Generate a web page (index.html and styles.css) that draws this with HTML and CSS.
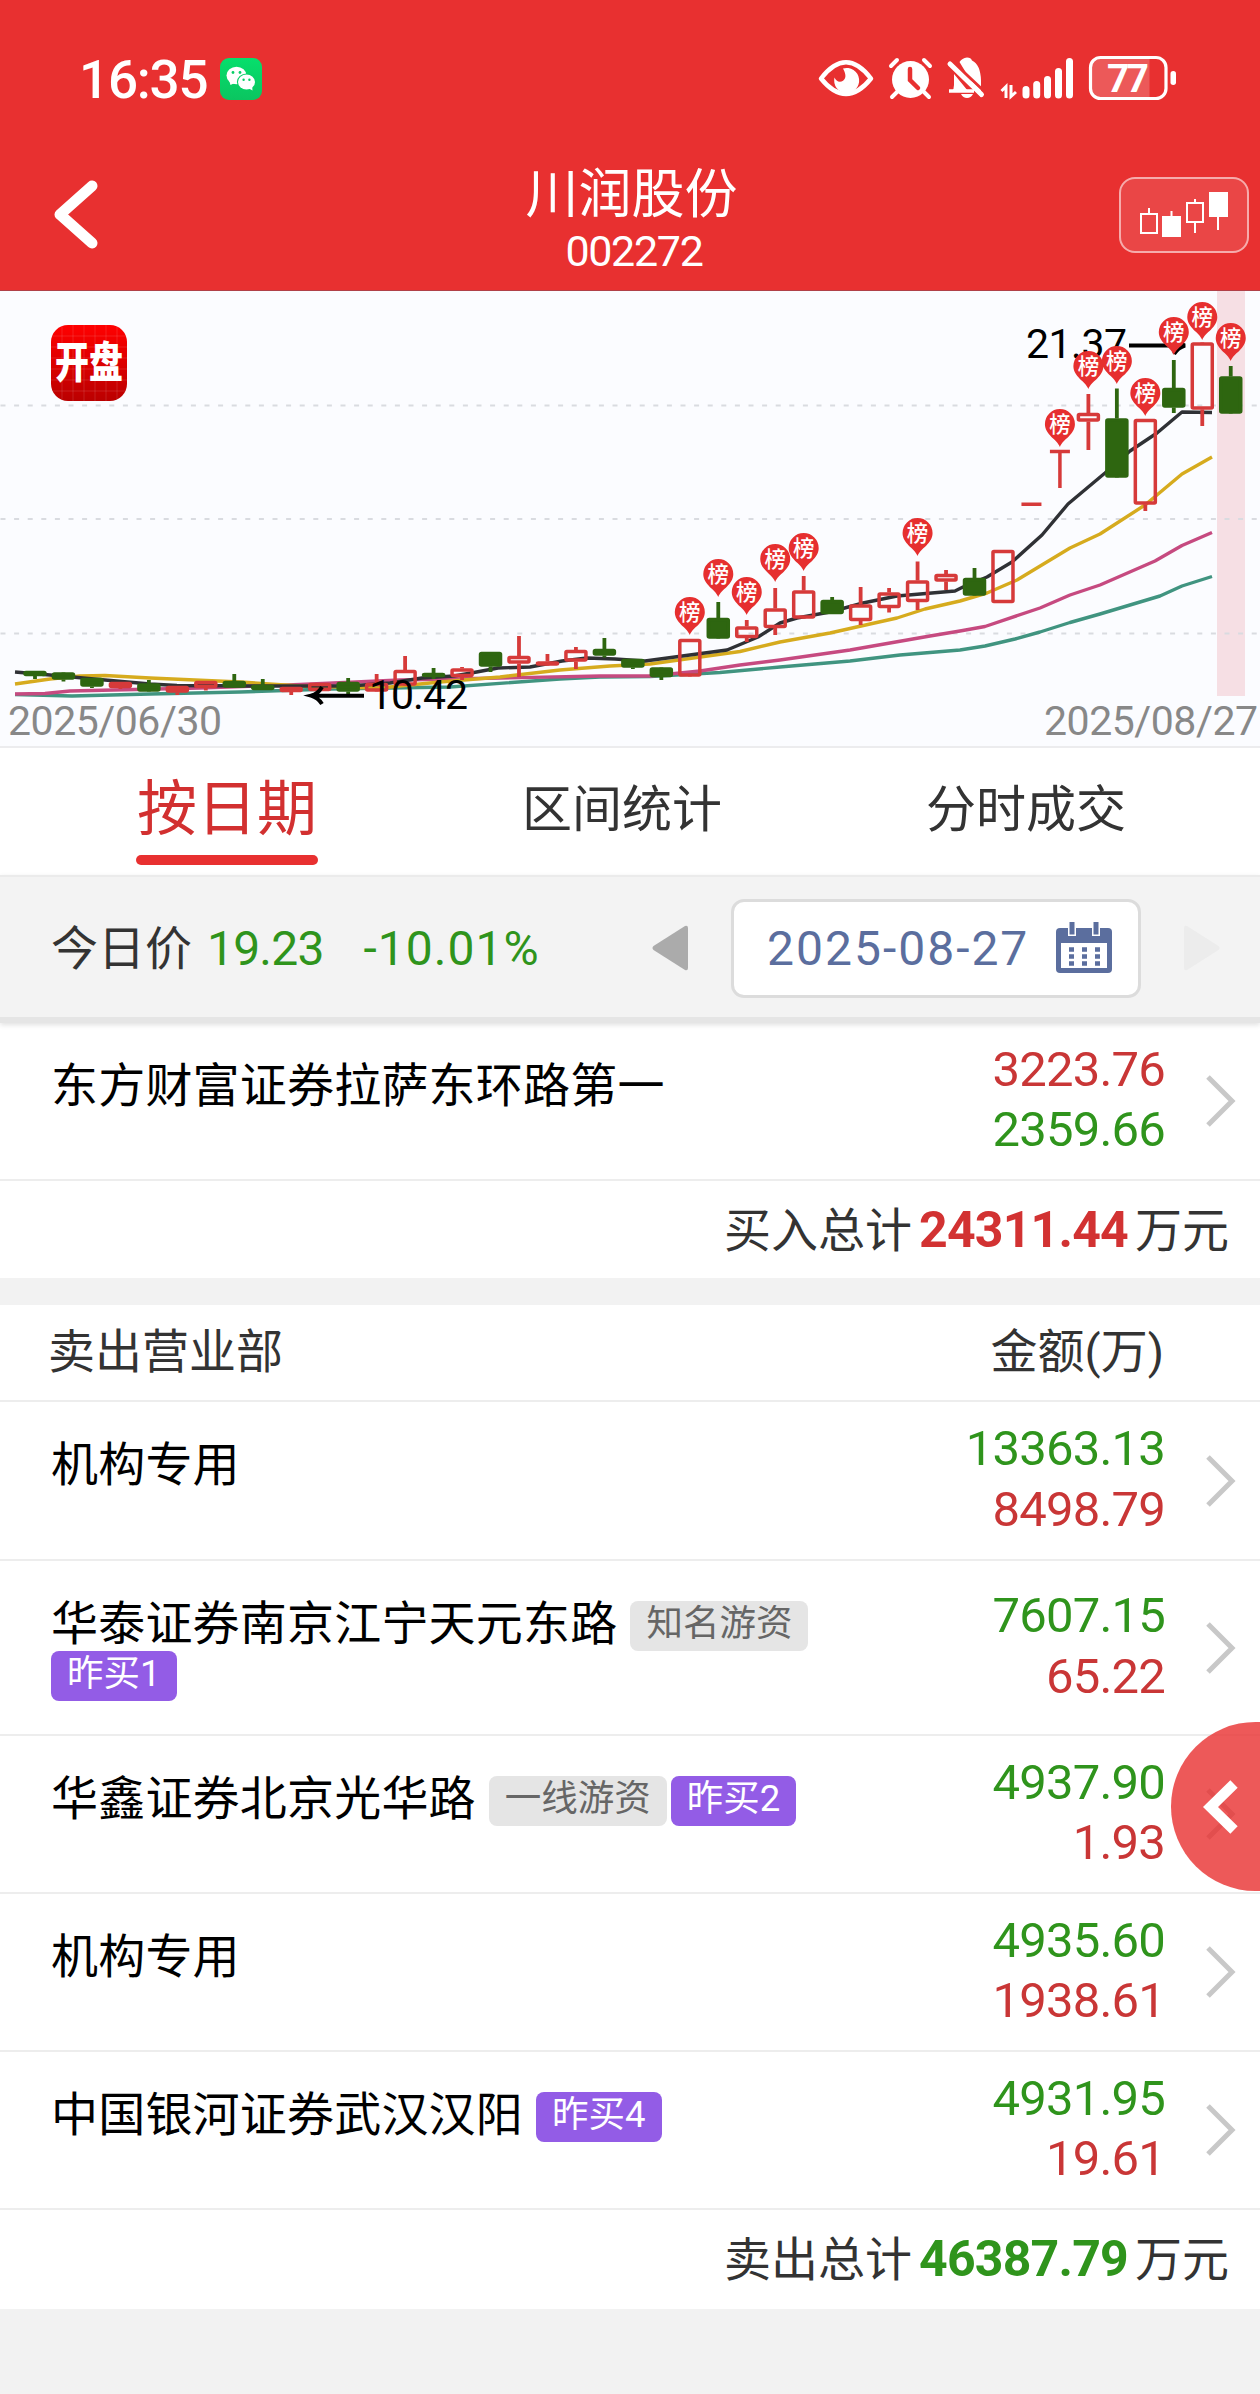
FILE: index.html
```
<!DOCTYPE html>
<html lang="zh-CN">
<head>
<meta charset="UTF-8">
<meta name="viewport" content="width=device-width, initial-scale=1.0">
<title>川润股份 002272</title>
<link rel="stylesheet" href="styles.css">
</head>
<body>
<header class="header">
    <div class="status-bar">
        <div class="status-left">
            <span class="clock">16:35</span>
            <svg class="wechat" width="42" height="42" viewBox="0 0 42 42">
                <defs>
                    <linearGradient id="wx" x1="0" y1="0" x2="0" y2="1">
                        <stop offset="0" stop-color="#06df6c"/>
                        <stop offset="1" stop-color="#0bc560"/>
                    </linearGradient>
                </defs>
                <rect width="42" height="42" rx="9" fill="url(#wx)"/>
                <path d="M9 22l1.500 5 5-2.500z" fill="#fff"/>
                <ellipse cx="16.500" cy="17.500" rx="10" ry="8.800" fill="#fff"/>
                <circle cx="13" cy="14.500" r="1.400" fill="#08cf66"/>
                <circle cx="20" cy="14.500" r="1.400" fill="#08cf66"/>
                <ellipse cx="26.500" cy="24" rx="9.600" ry="8.600" fill="#08cf66"/>
                <ellipse cx="26.500" cy="24" rx="8.500" ry="7.500" fill="#fff"/>
                <path d="M28 30l4.500 2.500-.5-5z" fill="#fff"/>
                <circle cx="23.600" cy="21.800" r="1.200" fill="#08cf66"/>
                <circle cx="29.400" cy="21.800" r="1.200" fill="#08cf66"/>
            </svg>
        </div>
        <svg class="status-icons" width="360" height="48" viewBox="817 55 360 48">
            <!-- eye -->
            <path d="M821 78.500Q846 46 871 78.500Q846 109.500 821 78.500z" fill="none" stroke="#fff" stroke-width="4.500" stroke-linejoin="round"/>
            <path d="M843 68.500a12.500 12.500 0 1 1-8.500 9q2 5 7 4q7-3 1.500-13z" fill="#fff"/>
            <!-- alarm -->
            <circle cx="910.500" cy="79.500" r="18.500" fill="#fff"/>
            <path d="M897 92l-5 5M924 92l5 5M891 66l6-6M930 66l-6-6" stroke="#fff" stroke-width="4" stroke-linecap="round"/>
            <path d="M910 69v11l8 8" fill="none" stroke="#e83030" stroke-width="4.500" stroke-linecap="round"/>
            <!-- muted bell -->
            <path d="M952 91q2-2 2-6V74l14 17z" fill="#fff"/>
            <path d="M949 91h25" stroke="#fff" stroke-width="3.500"/>
            <path d="M959.500 62Q962 58 967 57.500q4 0 5 3q8.500 4 9 20v17z" fill="#fff"/>
            <path d="M952 61l33 31" stroke="#e83030" stroke-width="3"/>
            <path d="M950 64l31.500 30.500" stroke="#fff" stroke-width="5" stroke-linecap="round"/>
            <path d="M961 94h12q-2 4-6 4t-6-4z" fill="#fff"/>
            <!-- data arrows and signal -->
            <path d="M1001.500 91l4.500-4.500V98M1011 85v11.500l5-4.500" fill="none" stroke="#fff" stroke-width="3"/>
            <g stroke="#fff" stroke-width="7" stroke-linecap="round">
                <path d="M1026 89.500v5.500M1036.700 84.500v10.500M1047.500 79.500v15.500M1058.500 71.500v23.500M1069.500 61.500v33.500"/>
            </g>
            <!-- battery -->
            <path d="M1100 58h49.500v40H1100a9 9 0 0 1-9-9V67a9 9 0 0 1 9-9z" fill="#fff" fill-opacity=".2"/>
            <rect x="1090.500" y="57.500" width="75.500" height="41" rx="10" fill="none" stroke="#fff" stroke-width="3.200"/>
            <rect x="1170.500" y="71" width="5.500" height="14" rx="2.700" fill="#fff"/>
            <text class="battery-text" x="1128" y="92" text-anchor="middle" textLength="42">77</text>
        </svg>
    </div>
    <div class="nav-bar">
        <svg class="back" width="46" height="70" viewBox="0 0 46 70">
            <path d="M40 6L8 34.500L40 63" fill="none" stroke="#fff" stroke-width="11" stroke-linecap="round" stroke-linejoin="round"/>
        </svg>
        <div class="stock">
            <div class="stock-name">川润股份</div>
            <div class="stock-code">002272</div>
        </div>
        <div class="kline-button">
            <svg width="90" height="48" viewBox="1140 191 90 48" fill="none" stroke="#fff" stroke-width="2">
                <path d="M1142 214h16v19h-16zM1150 208v6"/>
                <path d="M1164 217h17v19h-17zM1172.500 211v6" fill="#fff"/>
                <path d="M1188 203h16v19h-16zM1196 199v4M1196 222v11"/>
                <path d="M1211 193h17v23h-17zM1219 216v14" fill="#fff"/>
            </svg>
        </div>
    </div>
</header>

<section class="chart">
    <svg id="kline" width="1260" height="455" viewBox="0 291 1260 455"></svg>
</section>

<nav class="tabs">
    <div class="tab active">按日期</div>
    <div class="tab">区间统计</div>
    <div class="tab">分时成交</div>
</nav>

<div class="price-bar">
    <span class="price-label">今日价</span>
    <span class="price">19.23</span>
    <span class="change">-10.01%</span>
    <svg class="prev" width="36" height="46" viewBox="0 0 36 46"><path d="M36 3v40q0 3-3 2L1.500 25q-2-2 0-4L33 1q3-1 3 2z" fill="#ababab"/></svg>
    <div class="date-box">
        <span class="date">2025-08-27</span>
        <svg width="56" height="52" viewBox="0 0 56 52">
            <path d="M4 6h48q4 0 4 4v37q0 4-4 4H4q-4 0-4-4V10q0-4 4-4z" fill="#5b6e9e"/>
            <path d="M5 21h46v25H5z" fill="#fff"/>
            <path d="M12 0h8v14h-8zM36 0h8v14h-8z" fill="#fff"/>
            <path d="M13.500 0h5v12.500h-5zM37.500 0h5v12.500h-5z" fill="#5b6e9e"/>
            <path d="M13 27.500h31M13 34.500h31M13 41.500h31" stroke="#5b6e9e" stroke-width="4.500" stroke-dasharray="5 8"/>
        </svg>
    </div>
    <svg class="next" width="36" height="46" viewBox="0 0 36 46"><path d="M0 3v40q0 3 3 2L34.500 25q2-2 0-4L3 1q-3-1-3 2z" fill="#ececec"/></svg>
</div>

<section class="seats">
    <div class="row">
        <div class="name">东方财富证券拉萨东环路第一</div>
        <div class="amount"><span class="red">3223.76</span><span class="green">2359.66</span></div>
        <svg class="arrow" viewBox="0 0 30 52"><path d="M2 2l24 24L2 50"/></svg>
    </div>
    <div class="total">买入总计<b class="red-b">24311.44</b>万元</div>
</section>

<section class="seats sell">
    <div class="seats-head"><span>卖出营业部</span><span>金额(万)</span></div>
    <div class="row first">
        <div class="name">机构专用</div>
        <div class="amount"><span class="green">13363.13</span><span class="red">8498.79</span></div>
        <svg class="arrow" viewBox="0 0 30 52"><path d="M2 2l24 24L2 50"/></svg>
    </div>
    <div class="row tall">
        <div class="name">华泰证券南京江宁天元东路<span class="tag after">知名游资</span><br><span class="tag buy">昨买1</span></div>
        <div class="amount"><span class="green">7607.15</span><span class="red">65.22</span></div>
        <svg class="arrow" viewBox="0 0 30 52"><path d="M2 2l24 24L2 50"/></svg>
    </div>
    <div class="row">
        <div class="name">华鑫证券北京光华路<span class="tag after">一线游资</span><span class="tag buy">昨买2</span></div>
        <div class="amount"><span class="green">4937.90</span><span class="red">1.93</span></div>
        <svg class="arrow" viewBox="0 0 30 52"><path d="M2 2l24 24L2 50"/></svg>
    </div>
    <div class="row">
        <div class="name">机构专用</div>
        <div class="amount"><span class="green">4935.60</span><span class="red">1938.61</span></div>
        <svg class="arrow" viewBox="0 0 30 52"><path d="M2 2l24 24L2 50"/></svg>
    </div>
    <div class="row">
        <div class="name">中国银河证券武汉汉阳<span class="tag buy after">昨买4</span></div>
        <div class="amount"><span class="green">4931.95</span><span class="red">19.61</span></div>
        <svg class="arrow" viewBox="0 0 30 52"><path d="M2 2l24 24L2 50"/></svg>
    </div>
    <div class="total">卖出总计<b class="green-b">46387.79</b>万元</div>
</section>

<div class="drawer">
    <svg width="36" height="54" viewBox="0 0 36 54"><path d="M32 4L8.500 27L32 50" fill="none" stroke="#fff" stroke-width="10.500"/></svg>
</div>

<script>
    const RED = '#d63a3a';
    const GREEN = '#2e6610';
    const STEP = 28.47;
    const FIRST_X = 35;

    // [color, body top, body bottom, high, low]
    const candles = [
        ['g', 671, 676, 671, 679], ['g', 672.5, 679.5, 672, 681.5], ['g', 678, 686.5, 678, 688],
        ['r', 682, 688, 682, 689], ['g', 683.5, 691.5, 680, 692], ['r', 686, 692.5, 686, 695],
        ['r', 681, 688, 681, 690.5], ['g', 681, 687.5, 674, 688], ['g', 685, 690, 679, 690],
        ['r', 687, 692, 687, 695], ['r', 683, 691, 683, 691], ['g', 682, 691.5, 678, 694],
        ['r', 683, 691.5, 674, 692], ['r', 670, 685.5, 656, 686], ['g', 673, 677, 668, 679],
        ['r', 668.5, 677, 667, 680], ['g', 652, 666.5, 652, 672], ['r', 656, 663.5, 636, 677],
        ['r', 661.5, 665.5, 654, 666], ['r', 650, 661.5, 647, 669], ['g', 649, 655.5, 638, 657.5],
        ['g', 659, 667.5, 659, 669], ['g', 667.5, 677, 667, 680], ['r', 639, 676.5, 639, 676],
        ['g', 618, 638.5, 602, 638], ['r', 626.5, 638, 620, 642], ['r', 608.5, 628, 588, 635],
        ['r', 590.5, 618.5, 576, 618], ['g', 600, 614, 597, 614], ['r', 604.5, 621, 587, 625],
        ['r', 592.5, 608, 588, 612.5], ['r', 580.5, 602, 561.5, 610], ['r', 574, 581.5, 570, 590],
        ['g', 578, 595.5, 568, 595], ['r', 550, 603, 550, 603], ['-', 504.3, 504.3, 504, 504],
        ['-', 451.5, 451.5, 451, 488], ['r', 413, 421.5, 394, 450], ['g', 418.5, 477.5, 388.5, 477],
        ['r', 419, 504.5, 419, 511], ['g', 388, 407.5, 360, 413], ['r', 342.5, 409.5, 343, 426],
        ['g', 376.5, 413.5, 366, 413]
    ];

    // candle index -> centre of the 榜 pin
    const pins = [[23, 612], [24, 574], [25, 592], [26, 559], [27, 548], [31, 533], [36, 424],
        [37, 366], [38, 361], [39, 393], [40, 332], [41, 317], [42, 338]];

    const averages = [
        ['#409480', '15,694.5 72,696 150,694 240,692 330,689 450,687 560,679 600,677 650,676.500 720,672.500 780,667 850,661 900,655 960,650 985,646 1015,639 1040,632 1070,622.500 1100,614 1160,596 1182,586 1212,576.500'],
        ['#c64a80', '15,694 45,693.500 70,691 200,688 300,684.500 400,680 500,678 600,676 650,676 700,671 740,665 780,660 850,650 930,636 960,631 985,626.500 1040,608 1070,595 1100,585 1155,561 1182,545.500 1212,532.500'],
        ['#d6ab1e', '15,684 50,679 80,676 105,675.500 150,678 240,682 300,686 380,688 440,682 500,677 560,670 610,666 650,664 740,651.500 780,642 830,633 870,624 897,618 925,609 960,601 987,593 1017,580 1070,548 1100,534 1145,505 1182,474 1212,457'],
        ['#2f3135', '15,672 50,675 105,680 150,684 177,685.500 260,686 300,686 350,686 390,683 422,678 454,676 474,672.500 498,668 530,667 562,661 587,658 615,659 645,661 727,650 758,637 780,623 797,618 830,612 863,603 897,596 955,591 963,587 987,577 1012,562 1042,535 1068,504 1105,473 1130,451 1157,433 1182,412 1212,412.500']
    ];

    const x = index => FIRST_X + index * STEP;
    let out = '';

    out += '<rect x="1217" y="291" width="28" height="405" fill="#f6dfe4"/>';
    [405.5, 519, 633.5].forEach(y => {
        out += `<path d="M0.500 ${y}H1260" stroke="#d9dbe0" stroke-width="1.800" stroke-dasharray="5 8.600"/>`;
    });

    averages.forEach(([color, points]) => {
        out += `<polyline points="${points}" fill="none" stroke="${color}" stroke-width="3.400" stroke-linejoin="round"/>`;
    });

    candles.forEach(([type, top, bottom, high, low], i) => {
        const cx = x(i);
        const color = type === 'g' ? GREEN : RED;
        if (type === '-') {
            out += `<path d="M${cx - 10} ${top}h20M${cx} ${top}V${low}" stroke="${RED}" stroke-width="3.500"/>`;
            return;
        }
        out += `<path d="M${cx} ${high}V${top}M${cx} ${bottom}V${low}" stroke="${color}" stroke-width="3.800"/>`;
        out += `<rect x="${cx - 10}" y="${top + 1.5}" width="20" height="${bottom - top - 3}" rx="1"
            fill="${type === 'g' ? GREEN : 'none'}" stroke="${color}" stroke-width="3.500"/>`;
    });

    out += `<text class="chart-label" x="369" y="709" textLength="99">10.42</text>
        <path d="M364 695.700H311M322 687q-4 7-11 8.700q7 2 11 8.300" fill="none" stroke="#000" stroke-width="4"/>
        <text class="chart-label" x="1026" y="358" textLength="101">21.37</text>
        <path d="M1129 345.500h56M1174 337q4 7 11 8.500q-7 2-11 8.500" fill="none" stroke="#000" stroke-width="4"/>`;

    pins.forEach(([i, cy]) => {
        const cx = x(i);
        out += `<path d="M${cx} ${cy + 23}C${cx - 3} ${cy + 15} ${cx - 15} ${cy + 11} ${cx - 15} ${cy}
            A15 15 0 0 1 ${cx + 15} ${cy}C${cx + 15} ${cy + 11} ${cx + 3} ${cy + 15} ${cx} ${cy + 23}z" fill="#e62f2f"/>
            <text class="pin-text" x="${cx}" y="${cy + 7.8}" text-anchor="middle">榜</text>`;
    });

    out += `<text class="chart-date" x="8" y="735" textLength="214">2025/06/30</text>
        <text class="chart-date" x="1044" y="735" textLength="214">2025/08/27</text>`;

    // app logo
    out += `<defs><linearGradient id="kp" x1="0" y1="0" x2="0" y2="1">
            <stop offset="0" stop-color="#ff0000"/><stop offset="1" stop-color="#ba0000"/></linearGradient></defs>
        <rect x="51" y="325" width="76" height="76" rx="17" fill="url(#kp)"/>
        <path d="M62 326v74M73 325v76M84 325v76M95 325v76M106 325v76M117 326v74M52 336h74M51 347h76M51 358h76M51 369h76M51 380h76M52 391h74" stroke="#fff" stroke-opacity=".12"/>
        <text class="logo-text" transform="translate(89 378) scale(1 1.260)" text-anchor="middle">开盘</text>`;

    document.getElementById('kline').innerHTML = out;
</script>
</body>
</html>
```

FILE: styles.css
```
* {
    box-sizing: border-box;
}

body {
    margin: 0;
    width: 1260px;
    min-height: 2394px;
    position: relative;
    overflow-x: hidden;
    background-color: #f2f2f2;
    color: #333;
    font-family: Roboto, "Noto Sans CJK SC", sans-serif;
}

svg {
    display: block;
}

/* header */
.header {
    height: 291px;
    background-color: #e83030;
    border-bottom: 1px solid #b04048;
    color: #fff;
}

.status-bar {
    display: flex;
    justify-content: space-between;
    align-items: center;
    height: 103px;
    padding: 55px 83px 0 79px;
}

.status-left {
    display: flex;
    align-items: center;
    gap: 13px;
}

.clock {
    font-size: 53px;
    font-weight: 500;
    line-height: 48px;
    letter-spacing: -1.2px;
    margin-top: 2px;
}

.battery-text {
    font-size: 39px;
    font-weight: 700;
    fill: #fff;
}

.nav-bar {
    display: flex;
    align-items: flex-start;
    justify-content: space-between;
    height: 187px;
    padding: 61px 11px 0 52px;
}

.back {
    margin-top: 16px;
    margin-right: 84px;
}

.stock {
    text-align: center;
    margin-right: 31px;
}

.stock-name {
    font-size: 53px;
    line-height: 56px;
    margin-top: 3px;
    margin-right: 7px;
}

.stock-code {
    font-size: 43px;
    line-height: 50px;
    margin-top: 3px;
    margin-right: 2px;
    letter-spacing: -1.3px;
}

.kline-button {
    display: flex;
    align-items: center;
    justify-content: center;
    width: 130px;
    height: 76px;
    margin-top: 13px;
    border: 2px solid rgba(255, 255, 255, 0.55);
    border-radius: 16px;
    background-color: rgba(255, 255, 255, 0.11);
}

/* chart */
.chart {
    height: 457px;
    background-color: #fbfcff;
    border-bottom: 2px solid #ececee;
}

.chart-label {
    font-size: 41px;
    fill: #000;
}

.chart-date {
    font-size: 41px;
    fill: #888;
}

.pin-text {
    font-family: "Noto Sans CJK SC", sans-serif;
    font-size: 21.5px;
    font-weight: 500;
    fill: #fff;
}

.logo-text {
    font-family: "Noto Sans CJK SC", sans-serif;
    font-size: 34px;
    font-weight: 900;
    fill: #fff;
}

/* tabs */
.tabs {
    display: flex;
    justify-content: space-between;
    height: 127px;
    padding: 24px 134px 0 136px;
    background-color: #fff;
}

.tab {
    font-size: 50px;
    line-height: 76px;
}

.tab.active {
    width: 182px;
    font-size: 60px;
    text-align: center;
    white-space: nowrap;
    color: #d23030;
}

.tab.active::after {
    content: "";
    display: block;
    height: 10px;
    margin-top: 7px;
    border-radius: 5px;
    background-color: #e83030;
}

/* price and date */
.price-bar {
    display: flex;
    align-items: center;
    height: 148px;
    padding: 2px 40px 0 51px;
    background-color: #f3f3f3;
    border-top: 2px solid #ebebeb;
    border-bottom: 6px solid #e5e5e5;
    box-shadow: 0 2px 5px rgba(0, 0, 0, 0.12);
    position: relative;
    font-size: 48px;
}

.price-label {
    font-size: 47px;
    margin-bottom: 7px;
}

.price,
.change {
    color: #2f941c;
    letter-spacing: -0.8px;
}

.price {
    margin-left: 15px;
}

.change {
    margin-left: 40px;
    letter-spacing: 1px;
}

.prev {
    margin-left: auto;
    margin-right: 43px;
}

.next {
    margin-left: 43px;
}

.date-box {
    display: flex;
    align-items: center;
    justify-content: space-between;
    width: 410px;
    height: 99px;
    padding: 0 26px 0 33px;
    border: 3px solid #dcdcdc;
    border-radius: 13px;
    background-color: #fff;
}

.date {
    color: #5b6e9e;
    letter-spacing: 2px;
}

/* seat list */
.seats {
    background-color: #fff;
    font-size: 47px;
}

.seats.sell {
    margin-top: 27px;
}

.seats-head {
    display: flex;
    justify-content: space-between;
    align-items: center;
    height: 97px;
    padding: 0 96px 11px 48px;
    border-bottom: 2px solid #ededed;
}

.row {
    display: flex;
    height: 158px;
    padding-left: 51px;
    padding-right: 24px;
    border-bottom: 2px solid #ededed;
}

.row.first {
    height: 159px;
}

.row.tall {
    height: 175px;
}

.name {
    flex: 1;
    padding-top: 38px;
    line-height: 50px;
    letter-spacing: 0.2px;
    color: #000;
    white-space: nowrap;
}

.tag {
    display: inline-block;
    height: 50px;
    padding: 0 16px;
    margin-top: 2px;
    margin-bottom: -2px;
    margin-right: 4px;
    border-radius: 8px;
    background-color: #e5e5e5;
    color: #666;
    font-size: 36.5px;
    letter-spacing: 0;
    line-height: 45px;
    vertical-align: top;
}

.tag.after {
    margin-left: 13px;
}

.tag.buy {
    background-color: #935ce6;
    color: #fff;
}

.amount {
    display: flex;
    flex-direction: column;
    justify-content: center;
    align-items: flex-end;
    padding-bottom: 2px;
    font-size: 49px;
    line-height: 60.5px;
    letter-spacing: -0.8px;
    margin-right: 41px;
}

.arrow {
    width: 30px;
    height: 52px;
    align-self: center;
    fill: none;
    stroke: #c8c8c8;
    stroke-width: 5;
}

.red {
    color: #c93636;
}

.green {
    color: #2f941c;
}

.total {
    display: flex;
    justify-content: flex-end;
    align-items: center;
    height: 97px;
    padding-right: 31px;
    padding-bottom: 7px;
}

.sell .total {
    height: 99px;
    padding-bottom: 9px;
}

.total b {
    margin: 7px 7px 0;
    font-size: 50px;
    letter-spacing: -0.8px;
}

.red-b {
    color: #d23232;
}

.green-b {
    color: #2f941c;
}

/* floating handle on the right edge */
.drawer {
    position: absolute;
    top: 1722px;
    right: 0;
    display: flex;
    align-items: center;
    width: 89px;
    height: 169px;
    padding-left: 31px;
    border-radius: 85px 0 0 85px;
    background-color: rgba(232, 48, 48, 0.8);
}
```
